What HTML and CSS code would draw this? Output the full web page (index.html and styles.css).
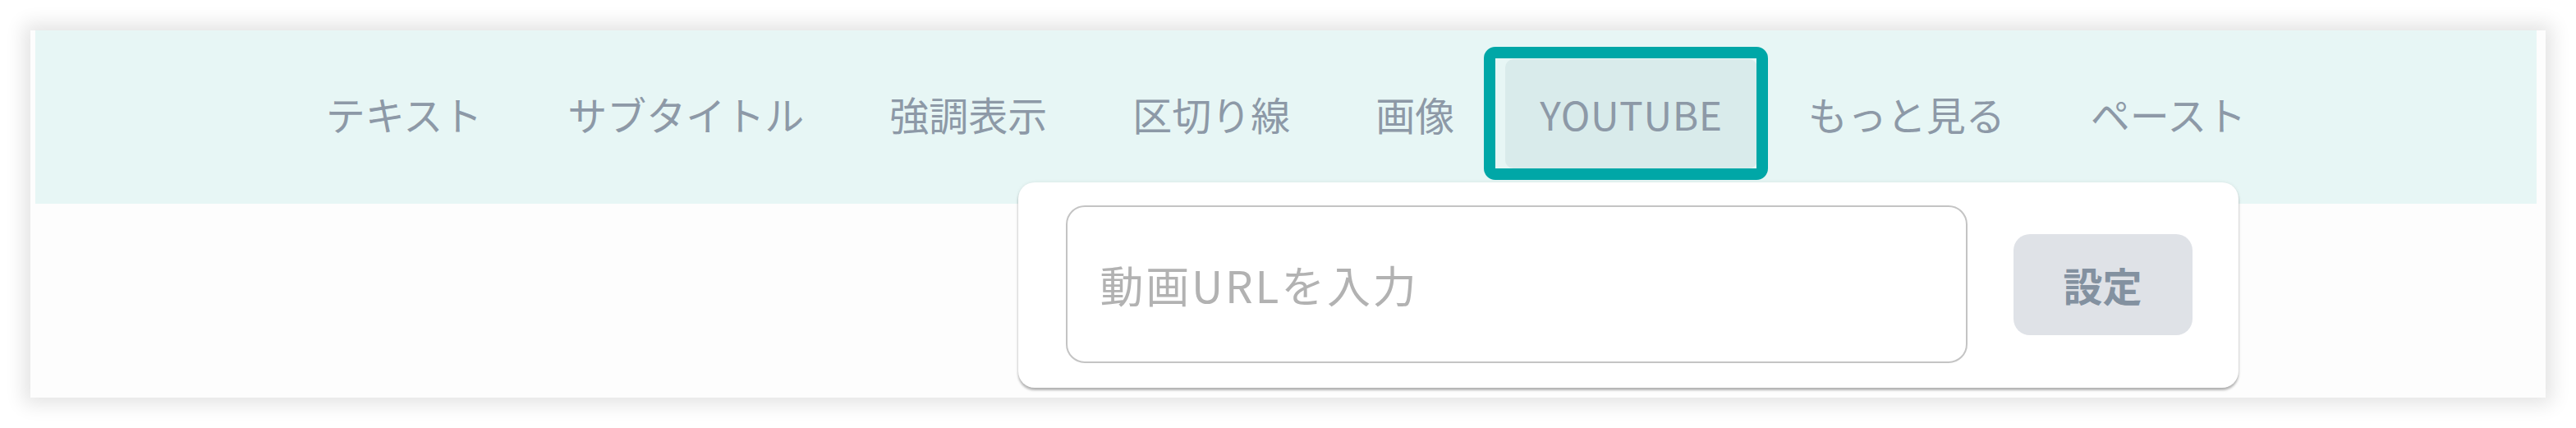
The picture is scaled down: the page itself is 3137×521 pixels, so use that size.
FILE: index.html
```html
<!DOCTYPE html>
<html lang="ja">
<head>
    <meta charset="UTF-8">
    <meta name="viewport" content="width=device-width, initial-scale=1.0">
    <title>エディタ ツールバー</title>
    <link rel="stylesheet" href="styles.css">
</head>
<body>
    <div class="frame">
        <div class="toolbar">
            <nav class="tabs">
                <button type="button" class="tab">テキスト</button>
                <button type="button" class="tab">サブタイトル</button>
                <button type="button" class="tab">強調表示</button>
                <button type="button" class="tab">区切り線</button>
                <button type="button" class="tab">画像</button>
                <div class="tab-wrap">
                    <button type="button" class="tab tab-active">YOUTUBE</button>
                    <!-- 動画URL入力ポップアップ -->
                    <div class="popover">
                        <input type="text" class="url-input" placeholder="動画URLを入力">
                        <button type="button" class="btn-set">設定</button>
                    </div>
                </div>
                <button type="button" class="tab">もっと見る</button>
                <button type="button" class="tab">ペースト</button>
            </nav>
        </div>
    </div>
</body>
</html>
```

FILE: styles.css
```css
body {
    margin: 0;
    padding: 37px;
    background-color: #ffffff;
    font-family: "Noto Sans CJK JP", "Noto Sans", sans-serif;
}
.frame {
    height: 447px;
    background-color: #fdfdfd;
    box-shadow: 0 0 22px 8px rgba(0, 0, 0, 0.11);
    padding: 0 11px 0 6px;
}
.toolbar {
    background-color: #e7f6f5;
    padding: 35px 0 43px;
}
.tabs {
    display: flex;
    justify-content: center;
    align-items: center;
    gap: 20px;
}
.tab {
    font-family: "Noto Sans CJK JP", "Noto Sans", sans-serif;
    font-size: 48px;
    line-height: 65px;
    padding: 34px 42px;
    color: #8d99a7;
    background: transparent;
    border: none;
    border-radius: 10px;
    cursor: pointer;
}
.tab-wrap {
    position: relative;
}
.tab-active {
    position: relative;
    display: block;
    letter-spacing: 0.6px;
    background-color: #d9ebeb;
}
/* 選択中の枠 */
.tab-active::after {
    content: "";
    position: absolute;
    left: -26px;
    right: -13px;
    top: -15px;
    bottom: -14px;
    border: 14px solid #00a7a7;
    border-radius: 14px;
}
.popover {
    position: absolute;
    top: calc(100% + 17px);
    left: 50%;
    transform: translateX(calc(-50% - 4px));
    width: 1486px;
    box-sizing: border-box;
    padding: 28px 56px 30px 58px;
    display: flex;
    align-items: center;
    gap: 56px;
    background-color: #ffffff;
    border-radius: 20px;
    box-shadow: 0 3px 3px rgba(0, 0, 0, 0.28), 0 0 4px rgba(0, 0, 0, 0.08);
    z-index: 10;
}
.url-input {
    flex: 1;
    height: 192px;
    box-sizing: border-box;
    padding: 0 40px;
    border: 2px solid #c4c4c4;
    border-radius: 23px;
    font-family: "Noto Sans CJK JP", "Noto Sans", sans-serif;
    font-size: 53px;
    letter-spacing: 2.8px;
    color: #555;
    outline: none;
}
.url-input::placeholder {
    color: #b2b2b2;
}
.btn-set {
    width: 218px;
    height: 123px;
    border: none;
    border-radius: 20px;
    background-color: #dfe2e7;
    color: #8391a0;
    font-family: "Noto Sans CJK JP", "Noto Sans", sans-serif;
    font-size: 48px;
    font-weight: bold;
    cursor: pointer;
}
```
